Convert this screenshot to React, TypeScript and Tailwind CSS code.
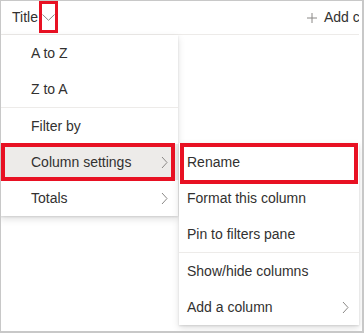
import React from 'react';

const font = { fontFamily: '"Liberation Sans", Arial, sans-serif' };

function ChevronRight() {
  return (
    <svg width="7" height="13" viewBox="0 0 7 13" className="shrink-0">
      <path d="M1 1 L6 6.5 L1 12" fill="none" stroke="#8a8886" strokeWidth="1" />
    </svg>
  );
}

function MenuItem({ label, sub, pad = 'pl-[31px]' }: { label: string; sub?: boolean; pad?: string }) {
  return (
    <div className={`flex h-[36px] items-center justify-between ${pad} pr-[10px] text-[14px] text-[#323130]`}>
      <span>{label}</span>
      {sub && <ChevronRight />}
    </div>
  );
}

const shadow = 'shadow-[0_3.2px_7.2px_rgba(0,0,0,0.13),0_0.6px_1.8px_rgba(0,0,0,0.11)]';

export default function App() {
  return (
    <div className="relative h-[333px] w-[364px] overflow-hidden bg-white" style={font}>
      {/* header row */}
      <div className="flex h-[35px] w-[359px] items-start overflow-hidden border-b border-[#edebe9]">
        <span className="mt-[8px] pl-[12px] text-[14px] leading-[19px] text-[#323130]">Title</span>
        <div className="ml-px mt-px flex h-[32px] w-[22px] items-center justify-center border-[3px] border-[#e81123]">
          <svg width="13" height="7" viewBox="0 0 13 7">
            <path d="M0.5 0.5 L6.5 6.3 L12.5 0.5" fill="none" stroke="#8a8886" strokeWidth="1" />
          </svg>
        </div>
        <div className="mt-[8px] flex shrink-0 items-center whitespace-nowrap pl-[249px] text-[14px] leading-[19px] text-[#323130]">
          <svg width="10" height="10" viewBox="0 0 10 10" className="mr-[7px]">
            <path d="M5 0 V10 M0 5 H10" stroke="#8a8886" strokeWidth="1" />
          </svg>
          Add column
        </div>
      </div>

      {/* first dropdown */}
      <div className={`absolute left-0 top-[35px] w-[178px] bg-white ${shadow}`}>
        <MenuItem label="A to Z" />
        <MenuItem label="Z to A" />
        <div className="h-px bg-[#edebe9]" />
        <MenuItem label="Filter by" />
        <div className="relative bg-[#edebe9]">
          <MenuItem label="Column settings" sub />
          <div className="absolute left-px top-[-1px] h-[38px] w-[174px] border-[4px] border-[#e81123]" />
        </div>
        <MenuItem label="Totals" sub />
      </div>

      {/* submenu */}
      <div className={`absolute left-[179px] top-[143px] w-[180px] bg-white pt-px ${shadow}`}>
        <MenuItem label="Rename" pad="pl-[8px]" />
        <MenuItem label="Format this column" pad="pl-[8px]" />
        <MenuItem label="Pin to filters pane" pad="pl-[8px]" />
        <div className="h-px bg-[#edebe9]" />
        <MenuItem label="Show/hide columns" pad="pl-[8px]" />
        <MenuItem label="Add a column" sub pad="pl-[8px]" />
        <div className="absolute left-px top-0 h-[41px] w-[178px] border-[4px] border-[#e81123]" />
      </div>

      {/* screenshot frame */}
      <div className="pointer-events-none absolute inset-0 border-b-2 border-l border-r-2 border-t border-[#c8c8c8]" />
    </div>
  );
}
